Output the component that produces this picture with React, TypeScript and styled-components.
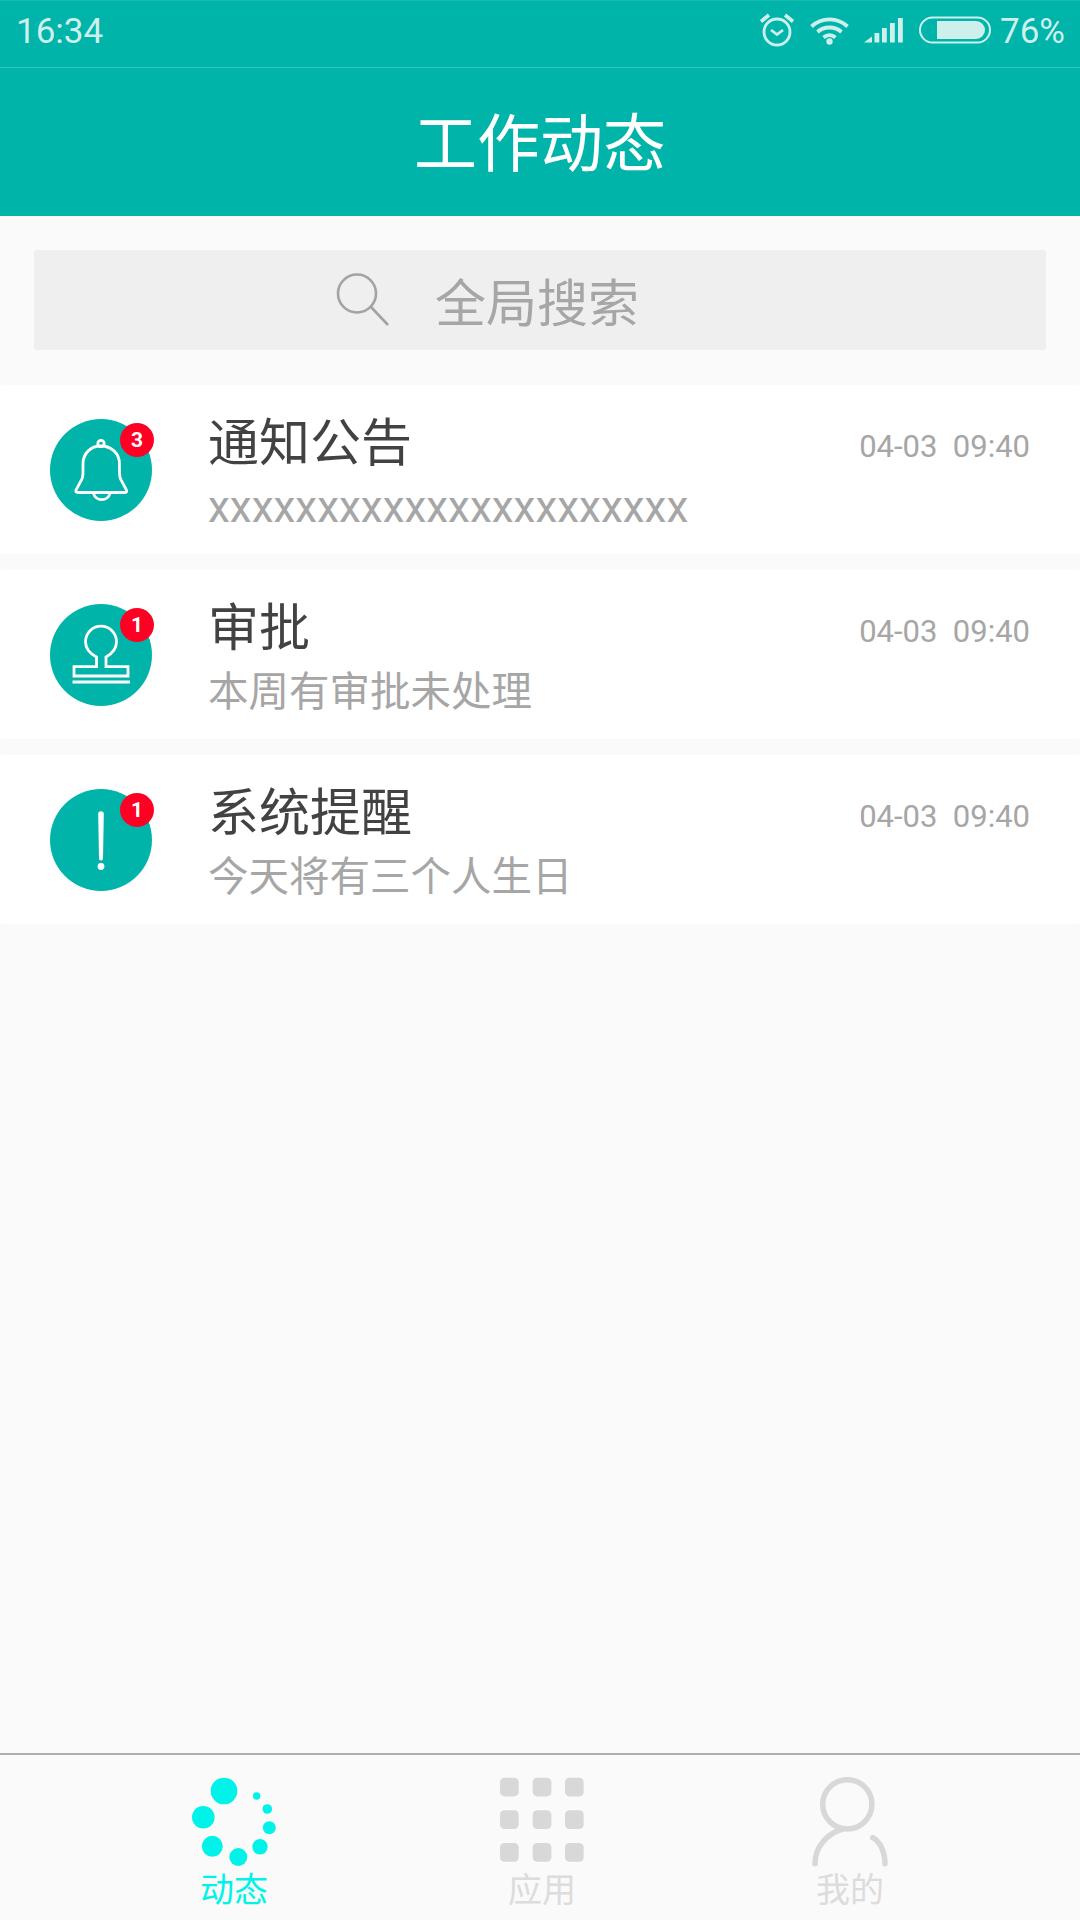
import React from "react";
import styled, { createGlobalStyle } from "styled-components";

const colors = {
  TEAL: "#00b4aa",
  TEAL_LINE: "#38c5bc",
  STATUS: "#cef0ed",
  PAGE: "#fafafa",
  SEARCH: "#efefef",
  DARK: "#424242",
  GRAY: "#a6a6a6",
  RED: "#ff0025",
  CYAN: "#00f3e9",
  TAB_GRAY: "#d8d8d8",
  TAB_LABEL: "#dcdcdc",
};

const FONT = `Roboto, "Noto Sans CJK SC", sans-serif`;

const GlobalStyle = createGlobalStyle`
  html, body {
    margin: 0;
    padding: 0;
    background: ${colors.PAGE};
  }
  * {
    box-sizing: border-box;
  }
`;

const Page = styled.div`
  width: 1080px;
  height: 1920px;
  display: flex;
  flex-direction: column;
  background: ${colors.PAGE};
  font-family: ${FONT};
  overflow: hidden;
`;

const StatusBar = styled.div`
  height: 68px;
  flex-shrink: 0;
  display: flex;
  align-items: center;
  justify-content: space-between;
  padding: 0 15px 6px 16px;
  background: ${colors.TEAL};
  border-top: 1px solid #16bbb1;
  border-bottom: 1px solid ${colors.TEAL_LINE};
  color: ${colors.STATUS};
  font-size: 35px;
`;

const StatusRight = styled.div`
  display: flex;
  align-items: center;
  gap: 8px;
`;

const StatusIcons = styled.div`
  display: flex;
  align-items: center;
  gap: 14px;
  margin-top: -2px;
`;

const HeaderBar = styled.div`
  height: 148px;
  flex-shrink: 0;
  display: flex;
  align-items: center;
  justify-content: center;
  background: ${colors.TEAL};
  color: #fff;
  font-size: 63px;
  padding-bottom: 7px;
`;

const SearchWrap = styled.div`
  padding: 34px 34px 35px;
`;

const SearchBox = styled.div`
  height: 100px;
  display: flex;
  align-items: center;
  justify-content: center;
  gap: 44px;
  background: ${colors.SEARCH};
  border-radius: 3px;
  color: ${colors.GRAY};
  font-size: 51px;
  padding-right: 106px;
`;

const List = styled.div`
  display: flex;
  flex-direction: column;
  gap: 16px;
`;

const Card = styled.div`
  height: 169px;
  display: flex;
  align-items: center;
  padding: 0 50px;
  background: #fff;
  border-radius: 4px;
`;

const Avatar = styled.div`
  position: relative;
  width: 102px;
  height: 102px;
  flex-shrink: 0;
  border-radius: 50%;
  background: ${colors.TEAL};
`;

const Badge = styled.span`
  position: absolute;
  top: 4px;
  left: 70px;
  width: 34px;
  height: 34px;
  display: flex;
  align-items: center;
  justify-content: center;
  border-radius: 50%;
  background: ${colors.RED};
  color: #fff;
  font-size: 21px;
  font-weight: 700;
`;

const CardBody = styled.div`
  flex: 1;
  align-self: flex-start;
  margin-left: 56px;
  padding-top: 28px;
  display: flex;
  flex-direction: column;
  gap: 9px;
`;

const CardTop = styled.div`
  display: flex;
  align-items: center;
  justify-content: space-between;
`;

const CardTitle = styled.div`
  font-size: 51px;
  line-height: 62px;
  color: ${colors.DARK};
`;

const CardDate = styled.div`
  font-size: 31px;
  color: ${colors.GRAY};
  white-space: pre;
  padding-top: 5px;
`;

const CardSub = styled.div<{ $latin?: boolean }>`
  font-size: ${({ $latin }) => ($latin ? "44px" : "40.5px")};
  line-height: 46px;
  color: ${colors.GRAY};
`;

const Spacer = styled.div`
  flex: 1;
`;

const TabBar = styled.div`
  height: 167px;
  flex-shrink: 0;
  display: grid;
  grid-template-columns: repeat(3, 308px);
  padding: 22px 0 0 80px;
  border-top: 2px solid #aeaeae;
  background: ${colors.PAGE};
`;

const Tab = styled.div`
  display: flex;
  flex-direction: column;
  align-items: center;
`;

const TabLabel = styled.span<{ $active?: boolean }>`
  font-size: 34px;
  line-height: 40px;
  margin-top: 3px;
  color: ${({ $active }) => ($active ? colors.CYAN : colors.TAB_LABEL)};
`;

const Layer = styled.svg`
  position: absolute;
  inset: 0;
`;

const AlarmIcon = () => (
  <svg width="36" height="36" viewBox="0 0 36 36" fill="none" stroke={colors.STATUS}>
    <circle cx="17" cy="20" r="13" strokeWidth="2.8" />
    <path d="M11 18l6 4.5 6-4.5" strokeWidth="2.8" />
    <path d="M1 9.5L9 3M33 9.5L25 3" strokeWidth="3.6" />
  </svg>
);

const WifiIcon = () => (
  <svg width="40" height="30" viewBox="0 0 40 30" fill="none" stroke={colors.STATUS} strokeWidth="3.8">
    <path d="M1.5 11.5C11.5 2 27.5 2 37.5 11.5" />
    <path d="M7.5 17C14 11 25 11 31.5 17" />
    <path d="M13.5 22.5C17 19.5 22 19.5 25.5 22.5" />
    <circle cx="19.5" cy="26.5" r="3.2" fill={colors.STATUS} stroke="none" />
  </svg>
);

const SignalIcon = () => (
  <svg width="40" height="30" viewBox="0 0 40 30" fill={colors.STATUS}>
    <path d="M0 27.5L8 21.5V27.5Z" />
    <rect x="10.5" y="18" width="4.8" height="9.5" />
    <rect x="18" y="13" width="4.8" height="14.5" />
    <rect x="26" y="8" width="4.8" height="19.5" />
    <rect x="34" y="3" width="4.8" height="24.5" />
  </svg>
);

const BatteryIcon = () => (
  <svg width="74" height="30" viewBox="0 0 74 30">
    <rect x="2" y="2.5" width="70" height="25" rx="12.5" fill="none" stroke={colors.STATUS} strokeWidth="2" />
    <path d="M19 6H58a9 9 0 0 1 0 18H19Z" fill={colors.STATUS} />
  </svg>
);

const SearchIcon = () => (
  <svg width="56" height="54" viewBox="0 0 56 54" fill="none" stroke="#a3a3a3" strokeWidth="2.6">
    <circle cx="22" cy="20.5" r="19" />
    <path d="M36 34L53 52" />
  </svg>
);

const BellGlyph = () => (
  <Layer viewBox="0 0 102 102" fill="none" stroke="#fff" strokeWidth="2.8">
    <path d="M28 73.5H75Q77.5 73.5 76.5 71L70.5 60Q69.5 57.5 69.5 53V45C69.5 34 61 27 51 27C41 27 33 34 33 45V53Q33 57.5 32 60L26 71Q25 73.5 28 73.5Z" />
    <circle cx="51" cy="24.5" r="3.2" />
    <path d="M43.5 74.5A8.5 8 0 0 0 60 74.5" />
  </Layer>
);

const StampGlyph = () => (
  <Layer viewBox="0 0 102 102" fill="none" stroke="#fff" strokeWidth="2.8">
    <path d="M46.5 62.7V53C40 49.5 35.5 44 35.5 37.7A15.5 15.5 0 1 1 66.5 37.7C66.5 44 62 49.5 56 53V62.7H78V72H24V62.7Z" />
    <path d="M22.5 78H80" />
  </Layer>
);

const AlertGlyph = () => (
  <Layer viewBox="0 0 102 102" fill="#fff">
    <path d="M48.2 25a2.8 2.8 0 0 1 5.6 0L53 69.5a2 2 0 0 1-4 0Z" />
    <circle cx="51" cy="77.5" r="3.4" />
  </Layer>
);

const spinnerDots = [
  [35, 14, 13.3],
  [14.3, 40.3, 11.3],
  [23.3, 69.3, 10.5],
  [49.3, 80, 9],
  [71, 69.7, 7.7],
  [80.3, 50.7, 6.5],
  [78.3, 32, 4.8],
  [67.7, 19, 3.7],
];

const SpinnerIcon = () => (
  <svg width="90" height="90" viewBox="0 0 90 90" fill={colors.CYAN}>
    {spinnerDots.map(([cx, cy, r]) => (
      <circle key={cx} cx={cx} cy={cy} r={r} />
    ))}
  </svg>
);

const GridIcon = () => (
  <svg width="90" height="90" viewBox="0 0 90 90" fill={colors.TAB_GRAY}>
    {[0.7, 33.3, 66].map((y) =>
      [3, 35.7, 68].map((x) => <rect key={`${x}-${y}`} x={x} y={y} width="18.7" height="18.7" rx="4.5" />)
    )}
  </svg>
);

const PersonIcon = () => (
  <svg width="90" height="90" viewBox="0 0 90 90" fill="none" stroke={colors.TAB_GRAY} strokeWidth="5.5" strokeLinecap="round">
    <circle cx="42.3" cy="27.3" r="24.6" />
    <path d="M10 86.7C10 69 23 56 38 52" />
    <path d="M67.7 60.7C75 64 80 75 80 86.7" />
  </svg>
);

const items = [
  { id: "notice", glyph: <BellGlyph />, badge: 3, title: "通知公告", sub: "xxxxxxxxxxxxxxxxxxxxxx", latin: true },
  { id: "approve", glyph: <StampGlyph />, badge: 1, title: "审批", sub: "本周有审批未处理" },
  { id: "system", glyph: <AlertGlyph />, badge: 1, title: "系统提醒", sub: "今天将有三个人生日" },
];

export default function App() {
  return (
    <Page>
      <GlobalStyle />
      <StatusBar>
        <span>16:34</span>
        <StatusRight>
          <StatusIcons>
            <AlarmIcon />
            <WifiIcon />
            <SignalIcon />
            <BatteryIcon />
          </StatusIcons>
          <span>76%</span>
        </StatusRight>
      </StatusBar>
      <HeaderBar>工作动态</HeaderBar>
      <SearchWrap>
        <SearchBox>
          <SearchIcon />
          <span>全局搜索</span>
        </SearchBox>
      </SearchWrap>
      <List>
        {items.map((item) => (
          <Card key={item.id}>
            <Avatar>
              {item.glyph}
              <Badge>{item.badge}</Badge>
            </Avatar>
            <CardBody>
              <CardTop>
                <CardTitle>{item.title}</CardTitle>
                <CardDate>04-03  09:40</CardDate>
              </CardTop>
              <CardSub $latin={item.latin}>{item.sub}</CardSub>
            </CardBody>
          </Card>
        ))}
      </List>
      <Spacer />
      <TabBar>
        <Tab>
          <SpinnerIcon />
          <TabLabel $active>动态</TabLabel>
        </Tab>
        <Tab>
          <GridIcon />
          <TabLabel>应用</TabLabel>
        </Tab>
        <Tab>
          <PersonIcon />
          <TabLabel>我的</TabLabel>
        </Tab>
      </TabBar>
    </Page>
  );
}
